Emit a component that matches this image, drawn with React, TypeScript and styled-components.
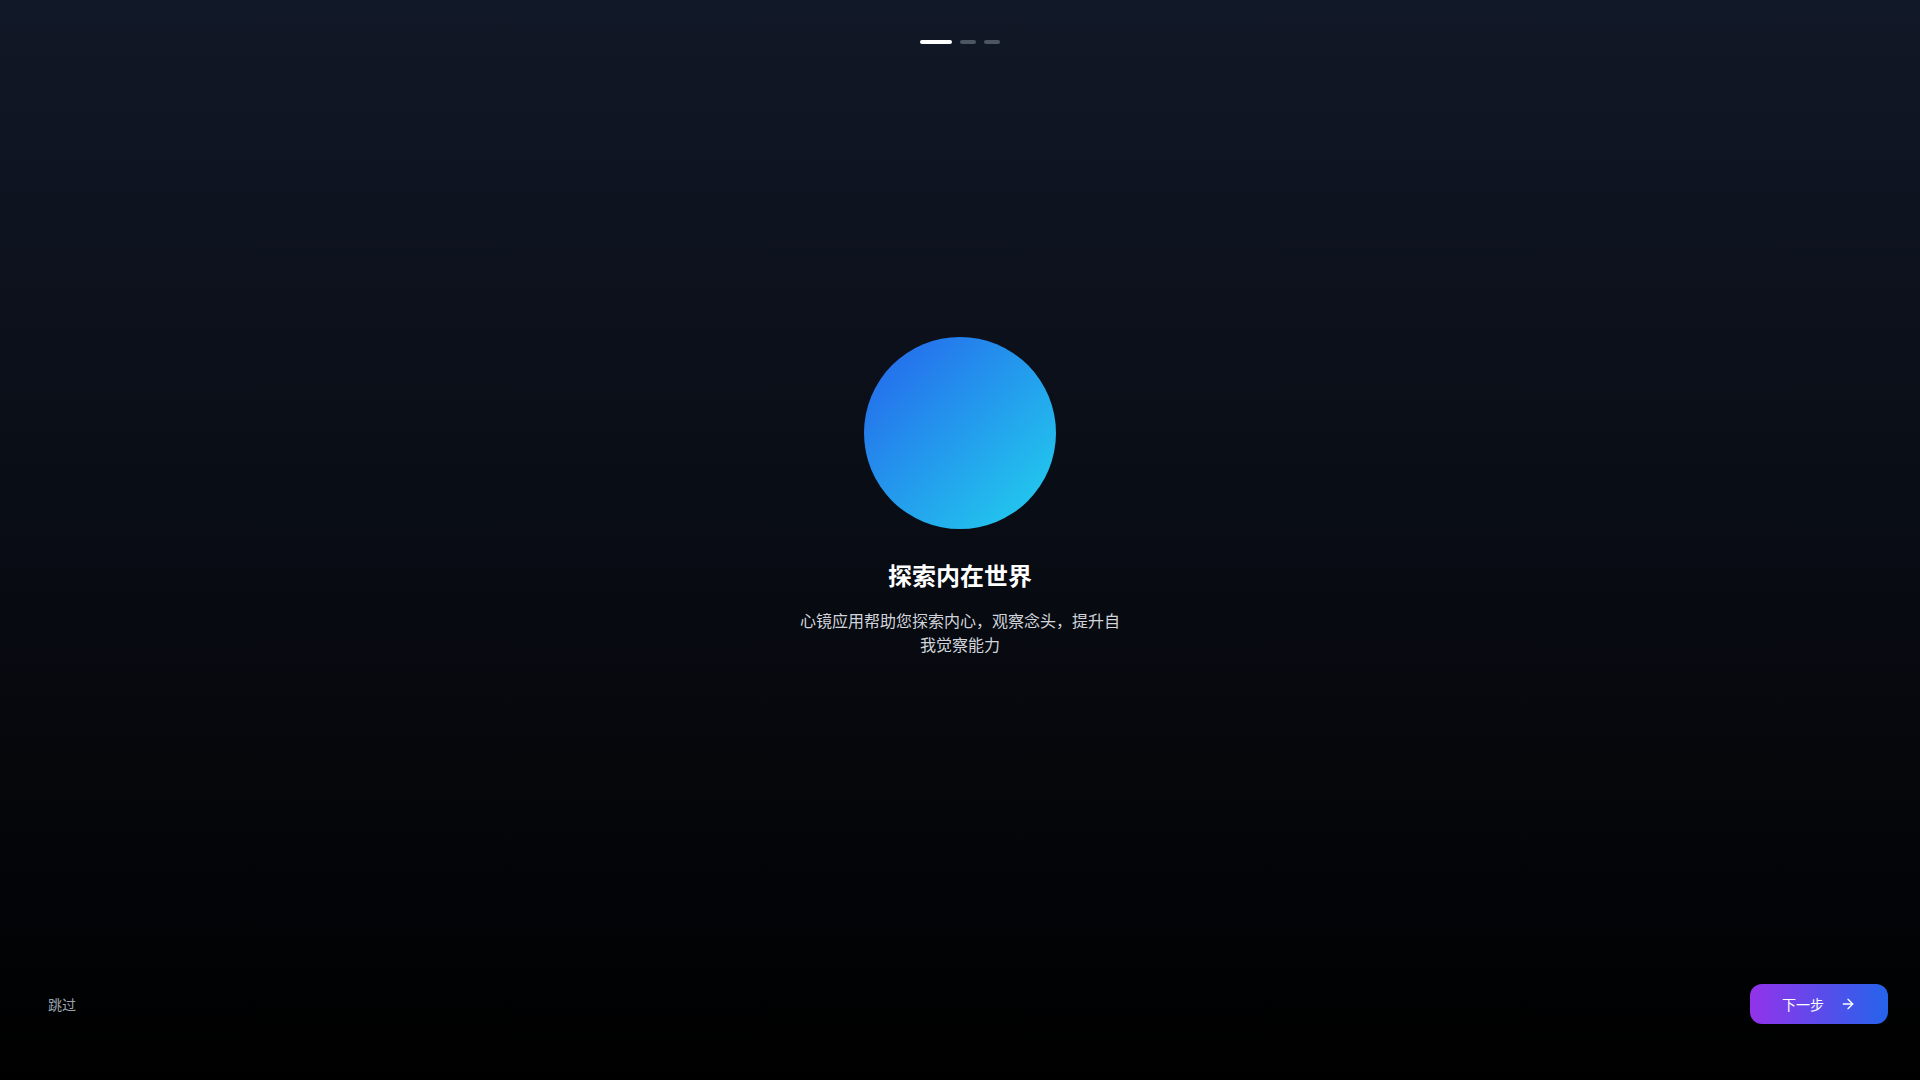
import React from "react";
import styled, { createGlobalStyle } from "styled-components";
import { ArrowRight } from "lucide-react";

const GlobalStyle = createGlobalStyle`
  html, body {
    margin: 0;
    padding: 0;
    height: 100%;
  }
  body {
    font-family: "Noto Sans CJK SC", "Noto Sans", Inter, sans-serif;
    background: #000;
  }
  #root {
    height: 100%;
  }
`;

const steps = [true, false, false];

const App: React.FC = () => {
  return (
    <>
      <GlobalStyle />
      <Page>
        <Progress>
          {steps.map((active, i) => (
            <Dot key={i} active={active} />
          ))}
        </Progress>
        <Content>
          <Orb />
          <Title>探索内在世界</Title>
          <Subtitle>心镜应用帮助您探索内心，观察念头，提升自我觉察能力</Subtitle>
        </Content>
        <Footer>
          <SkipButton>跳过</SkipButton>
          <NextButton>
            下一步
            <ArrowRight size={16} strokeWidth={2} />
          </NextButton>
        </Footer>
      </Page>
    </>
  );
};

const Page = styled.div`
  height: 100vh;
  display: flex;
  flex-direction: column;
  background: linear-gradient(to bottom, #111827 0%, #000000 100%);
  color: #fff;
`;

const Progress = styled.div`
  display: flex;
  justify-content: center;
  gap: 8px;
  padding: 40px 0 4px;
`;

const Dot = styled.div<{ active: boolean }>`
  width: ${(props) => (props.active ? "32px" : "16px")};
  height: 4px;
  border-radius: 2px;
  background: ${(props) => (props.active ? "#ffffff" : "#4b5563")};
`;

const Content = styled.main`
  flex: 1;
  display: flex;
  flex-direction: column;
  align-items: center;
  justify-content: center;
  text-align: center;
`;

const Orb = styled.div`
  width: 192px;
  height: 192px;
  border-radius: 50%;
  background: linear-gradient(135deg, #2563eb 0%, #22d3ee 100%);
  margin-bottom: 30px;
`;

const Title = styled.h1`
  margin: 0 0 17px;
  font-size: 24px;
  line-height: 32px;
  font-weight: 700;
  color: #ffffff;
`;

const Subtitle = styled.p`
  margin: 0 0 4px;
  max-width: 320px;
  font-size: 16px;
  line-height: 24px;
  color: #d1d5db;
`;

const Footer = styled.footer`
  display: flex;
  align-items: center;
  justify-content: space-between;
  padding: 36px 32px 56px;
`;

const SkipButton = styled.button`
  border: none;
  background: transparent;
  padding: 8px 16px;
  font-family: inherit;
  font-size: 14px;
  line-height: 20px;
  color: #9ca3af;
  cursor: pointer;
`;

const NextButton = styled.button`
  display: flex;
  align-items: center;
  gap: 16px;
  height: 40px;
  padding: 0 32px;
  border: none;
  border-radius: 12px;
  background: linear-gradient(to right, #9333ea, #2563eb);
  font-family: inherit;
  font-size: 14px;
  line-height: 20px;
  color: #ffffff;
  cursor: pointer;
`;

export default App;
